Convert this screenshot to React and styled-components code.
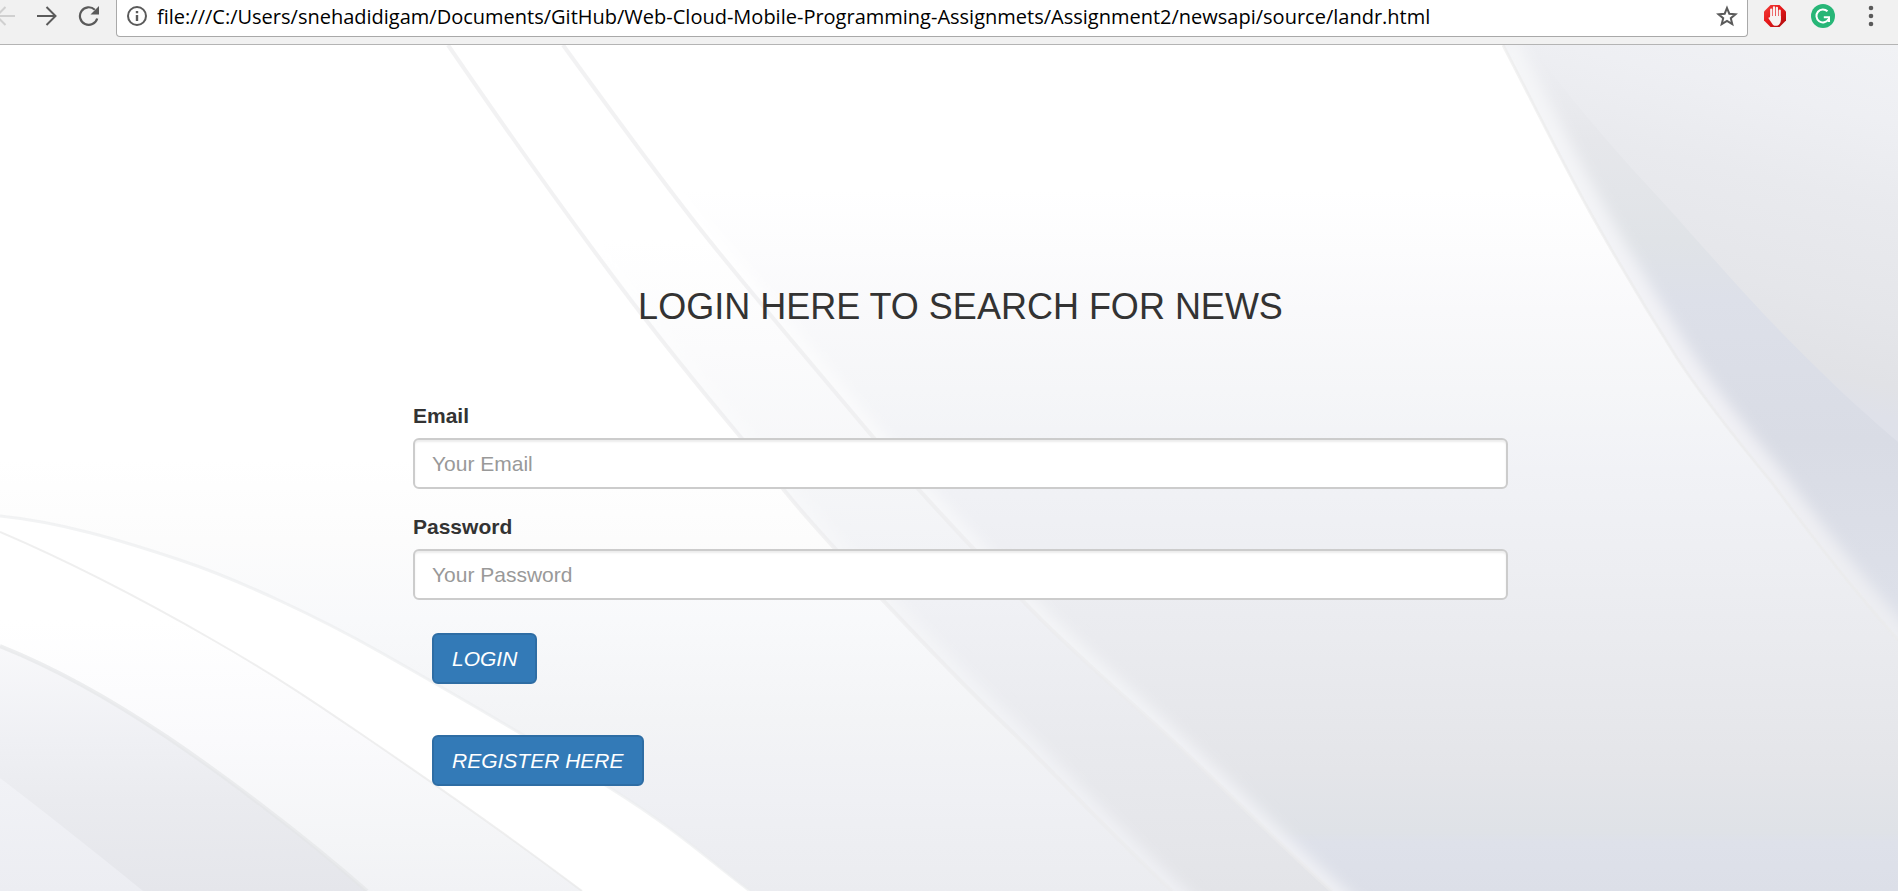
import React from "react";
import styled, { createGlobalStyle } from "styled-components";

const GlobalStyle = createGlobalStyle`
  *, *::before, *::after { box-sizing: border-box; }
  body {
    margin: 0;
    color: #333;
    background: #fff;
    font-family: "Liberation Sans", Arial, Helvetica, sans-serif;
    font-size: 21px;
    line-height: 30px;
  }
`;

const Window = styled.div`
  display: flex;
  flex-direction: column;
  min-height: 100vh;
  overflow: hidden;
`;

const Toolbar = styled.header`
  display: flex;
  align-items: flex-start;
  height: 45px;
  padding-right: 3px;
  background: #f1f1f1;
  border-bottom: 1px solid #b4b4b4;
`;

const NavButtons = styled.nav`
  display: flex;
  margin: 0 6px 0 -16px;
`;

const ToolButton = styled.button`
  display: flex;
  align-items: center;
  justify-content: center;
  flex: none;
  width: ${(p) => p.$width}px;
  height: 32px;
  padding: 0;
  border: 0;
  background: none;
  color: #5a5a5a;

  &:disabled { color: #d0d0d0; }
`;

const AddressBar = styled.div`
  display: flex;
  flex: 1;
  min-width: 0;
  height: 37px;
  padding-bottom: 4px;
  background: #fff;
  border: 1px solid #a9a9a9;
  border-top: 0;
  border-radius: 0 0 4px 4px;
`;

const AddressInput = styled.input`
  flex: 1;
  min-width: 0;
  height: 32px;
  padding: 0;
  border: 0;
  outline: 0;
  background: none;
  color: #000;
  font-family: "Open Sans", "Noto Sans", sans-serif;
  font-size: 20px;
`;

const Extensions = styled.div`
  display: flex;
  margin-left: 3px;
`;

const Page = styled.main`
  position: relative;
  flex: 1;
  padding: 242px 0 100px 23px;
`;

const Backdrop = styled.svg`
  position: absolute;
  inset: 0;
  width: 100%;
  height: 100%;
`;

const LoginForm = styled.form`
  position: relative;
  width: 1095px;
  max-width: 100%;
  margin: 0 auto;
`;

const Title = styled.h1`
  margin: 0 0 74px;
  font-size: 36px;
  font-weight: 400;
  line-height: 40px;
  text-align: center;
`;

const Field = styled.div`
  margin-bottom: 23px;
`;

const Label = styled.label`
  display: block;
  margin-bottom: 7px;
  font-weight: 700;
`;

const TextInput = styled.input`
  display: block;
  width: 100%;
  height: 51px;
  padding: 0 17px;
  border: 2px solid #ccc;
  border-radius: 6px;
  background: #fff;
  box-shadow: inset 0 2px 2px rgba(0, 0, 0, 0.075);
  color: #555;
  font: inherit;

  &::placeholder { color: #999; opacity: 1; }
`;

const Actions = styled.div`
  display: flex;
  flex-direction: column;
  align-items: flex-start;
  gap: 51px;
  padding: 10px 19px 0;
`;

const PrimaryButton = styled.button`
  height: 51px;
  padding: 0 18px;
  border: 2px solid #2e6da4;
  border-radius: 6px;
  background: #337ab7;
  color: #fff;
  font: inherit;
  font-style: italic;
`;

const CURVES = {
  a: "M448,45 C507,131 570,220 633,303 S740,435 784,490 S960,682 1000,720 S1110,834 1172,891",
  b: "M563,45 C605,103 650,165 697,225 S810,362 873,437 S985,560 1023,601 S1130,701 1172,740 S1275,840 1332,891",
  c: "M1503,45 C1530,97 1560,158 1590,212 C1618,262 1646,309 1677,358 C1706,402 1740,444 1773,484 C1800,521 1850,586 1898,640",
  d: "M1530,45 C1565,91 1605,140 1647,185 S1735,285 1780,331 S1857,407 1898,442",
  e: "M0,516 C60,522 120,540 180,560 S320,618 380,652 S540,744 610,788 S706,858 750,891",
  f: "M0,532 C75,564 145,601 213,640 S320,706 367,738 S510,837 582,891",
  g: "M0,646 C60,670 115,702 167,737 S300,832 367,891",
  h: "M0,778 C50,816 95,852 143,891",
};

const GRADIENTS = {
  base: [[460, "#ffffff"], [540, "#fcfcfc"], [620, "#f8f9fb"], [720, "#f3f4f6"], [800, "#eff0f4"], [891, "#ebecf0"]],
  ab: [[240, "#ffffff"], [350, "#fbfbfc"], [480, "#f5f6f8"], [600, "#f0f1f5"], [740, "#e9eaee"], [891, "#e3e4e8"]],
  bc: [[190, "#ffffff"], [310, "#f9f9fb"], [390, "#f5f6f8"], [470, "#f1f2f6"], [570, "#edeef2"], [660, "#e9eaee"], [770, "#e4e5e9"], [832, "#dfe2e7"], [842, "#dee1ea"], [891, "#dcdfe8"]],
  cd: [[45, "#eeeff3"], [140, "#e6e7eb"], [240, "#e0e3e7"], [300, "#dde0e9"], [440, "#d9dce5"], [520, "#dbdee7"], [640, "#dee1ea"]],
  dr: [[45, "#f1f2f5"], [120, "#eeeff3"], [200, "#e9eaee"], [300, "#e5e6ea"], [370, "#e1e2e6"], [400, "#dfe1e9"], [442, "#dee1ea"]],
  fg: [[620, "#ffffff"], [740, "#fafafc"], [840, "#f4f5f7"], [891, "#f1f2f5"]],
  gh: [[646, "#f8f8fa"], [740, "#eff0f4"], [800, "#eaebef"], [891, "#e5e6eb"]],
  hl: [[778, "#f1f2f6"], [891, "#ecedf2"]],
};

const REGIONS = [
  ["ab", `${CURVES.a} H1898 V45 Z`],
  ["bc", `${CURVES.b} H1898 V45 Z`],
  ["cd", `${CURVES.c} V45 Z`],
  ["dr", `${CURVES.d} V45 Z`],
  ["white", `${CURVES.e} H0 Z`],
  ["fg", `${CURVES.f} H0 Z`],
  ["gh", `${CURVES.g} H0 Z`],
  ["hl", `${CURVES.h} H0 Z`],
];

const SOFT_EDGES = [
  ["a", "L1240,953", "glowAB", "ab", 20],
  ["b", "L1400,953", "glowAB", "bc", 20],
  ["c", "L1944,692", "glowC", "cd", 30],
];

const LINES = [
  ["a", "#ebebec", 4],
  ["b", "#ebebec", 4],
  ["c", "#ebebeb", 3],
  ["e", "#ebecee", 3],
  ["f", "#e6e6e6", 2],
  ["g", "#e4e5e6", 4],
];

function Waves() {
  return (
    <Backdrop viewBox="0 45 1898 846" preserveAspectRatio="none" aria-hidden="true">
      <defs>
        {Object.entries(GRADIENTS).map(([id, stops]) => (
          <linearGradient
            key={id}
            id={id}
            gradientUnits="userSpaceOnUse"
            x1={id === "dr" ? 1898 : 0}
            y1="45"
            x2={id === "dr" ? 1700 : 0}
            y2="891"
          >
            {stops.map(([y, color]) => (
              <stop key={y} offset={(y - 45) / 846} stopColor={color} />
            ))}
          </linearGradient>
        ))}
        <linearGradient id="white"><stop stopColor="#fff" /></linearGradient>
        <linearGradient id="glowAB" gradientUnits="userSpaceOnUse" x1="0" y1="250" x2="0" y2="891">
          <stop offset="0" stopColor="#fff" />
          <stop offset="0.5" stopColor="#f5f6f8" />
          <stop offset="1" stopColor="#eff0f4" />
        </linearGradient>
        <linearGradient id="glowC" gradientUnits="userSpaceOnUse" x1="0" y1="45" x2="0" y2="640">
          <stop offset="0" stopColor="#f5f6f8" />
          <stop offset="0.6" stopColor="#f1f1f5" />
          <stop offset="1" stopColor="#ecedf1" />
        </linearGradient>
        <filter id="soft" filterUnits="userSpaceOnUse" x="0" y="0" width="1980" height="980">
          <feGaussianBlur stdDeviation="7" />
        </filter>
        {REGIONS.map(([id, d]) => (
          <clipPath key={id} id={`clip-${id}`}><path d={d} /></clipPath>
        ))}
      </defs>
      <rect x="0" y="45" width="1898" height="846" fill="url(#base)" />
      {REGIONS.slice(0, 3).map(([id, d]) => <path key={id} d={d} fill={`url(#${id})`} />)}
      {SOFT_EDGES.map(([curve, tail, glow, region, width]) => (
        <g key={curve} clipPath={`url(#clip-${region})`}>
          <path d={`${CURVES[curve]} ${tail}`} fill="none" stroke={`url(#${glow})`} strokeWidth={width} filter="url(#soft)" />
        </g>
      ))}
      {REGIONS.slice(3).map(([id, d]) => <path key={id} d={d} fill={`url(#${id})`} />)}
      {LINES.map(([curve, color, width]) => (
        <path key={curve} d={CURVES[curve]} fill="none" stroke={color} strokeWidth={width} strokeOpacity="0.65" />
      ))}
    </Backdrop>
  );
}

const ArrowIcon = ({ flip }) => (
  <svg width="20" height="20" viewBox="0 0 20 20" fill="none" stroke="currentColor" strokeWidth="2">
    <path d={flip ? "M20 10H2M10.500 1L1.500 10l9 9" : "M0 10h18M9.500 1l9 9-9 9"} />
  </svg>
);

const ReloadIcon = () => (
  <svg width="22" height="22" viewBox="0 0 22 22" fill="none" stroke="currentColor" strokeWidth="2.200">
    <path d="M19.200 13.500A8.800 8.800 0 1 1 16.800 4.700" />
    <path d="M21 1v8.500h-8.500z" fill="currentColor" stroke="none" />
  </svg>
);

const InfoIcon = () => (
  <svg width="22" height="22" viewBox="0 0 22 22" fill="none" stroke="currentColor" strokeWidth="2">
    <circle cx="11" cy="11" r="9" />
    <path d="M11 10v6M11 6v2.200" strokeWidth="2.400" />
  </svg>
);

const StarIcon = () => (
  <svg width="22" height="22" viewBox="0 0 22 22" fill="none" stroke="currentColor" strokeWidth="2">
    <path d="M11 3l2.300 5.700 6.200.5-4.700 4 1.500 6L11 16l-5.300 3.200 1.500-6-4.700-4 6.200-.5z" />
  </svg>
);

const BlockerIcon = () => (
  <svg width="24" height="24" viewBox="0 0 24 24">
    <defs>
      <linearGradient id="red" x1="0" y1="0" x2="1" y2="1">
        <stop offset="0" stopColor="#f0423c" />
        <stop offset="0.450" stopColor="#e8191b" />
        <stop offset="1" stopColor="#a90a0c" />
      </linearGradient>
    </defs>
    <path d="M7.500 1h9L23 7.500v9L16.500 23h-9L1 16.500v-9z" fill="url(#red)" />
    <g stroke="#f7f3f2" strokeWidth="2.200" strokeLinecap="round" fill="none">
      <path d="M8.200 5.500v9M11 3.300v10M13.900 3.800v10M16.700 6.500v9" />
    </g>
    <path d="M7.100 12h10.700v4.500c0 2.700-2 5.300-4.800 5.300-2.200 0-3.300-1-4.300-2.900L5.600 14.500c-.5-1 .7-1.700 1.500-.8z" fill="#f7f3f2" />
  </svg>
);

const GrammarIcon = () => (
  <svg width="24" height="24" viewBox="0 0 24 24" fill="none" stroke="#fff" strokeWidth="2">
    <circle cx="12" cy="12" r="12" fill="#27b677" stroke="none" />
    <path d="M16.500 7.300a6.500 6.500 0 1 0 1 8" />
    <path d="M12.800 13.300h5.200V18" />
  </svg>
);

const MenuIcon = () => (
  <svg width="6" height="22" viewBox="0 0 6 22" fill="currentColor">
    <circle cx="3" cy="3" r="2.300" />
    <circle cx="3" cy="11" r="2.300" />
    <circle cx="3" cy="19" r="2.300" />
  </svg>
);

export default function App() {
  return (
    <Window>
      <GlobalStyle />
      <Toolbar>
        <NavButtons aria-label="History">
          <ToolButton $width={42} disabled aria-label="Back"><ArrowIcon flip /></ToolButton>
          <ToolButton $width={42} aria-label="Forward"><ArrowIcon /></ToolButton>
          <ToolButton $width={42} aria-label="Reload"><ReloadIcon /></ToolButton>
        </NavButtons>
        <AddressBar>
          <ToolButton $width={40} aria-label="Page information"><InfoIcon /></ToolButton>
          <AddressInput
            aria-label="Address"
            readOnly
            value="file:///C:/Users/snehadidigam/Documents/GitHub/Web-Cloud-Mobile-Programming-Assignmets/Assignment2/newsapi/source/landr.html"
          />
          <ToolButton $width={40} aria-label="Bookmark this page"><StarIcon /></ToolButton>
        </AddressBar>
        <Extensions>
          <ToolButton $width={48} aria-label="Ad blocker"><BlockerIcon /></ToolButton>
          <ToolButton $width={48} aria-label="Grammar checker"><GrammarIcon /></ToolButton>
          <ToolButton $width={48} aria-label="Menu"><MenuIcon /></ToolButton>
        </Extensions>
      </Toolbar>
      <Page>
        <Waves />
        <LoginForm onSubmit={(event) => event.preventDefault()}>
          <Title>LOGIN HERE TO SEARCH FOR NEWS</Title>
          <Field>
            <Label htmlFor="email">Email</Label>
            <TextInput id="email" type="email" placeholder="Your Email" />
          </Field>
          <Field>
            <Label htmlFor="password">Password</Label>
            <TextInput id="password" type="password" placeholder="Your Password" />
          </Field>
          <Actions>
            <PrimaryButton type="submit">LOGIN</PrimaryButton>
            <PrimaryButton type="button">REGISTER HERE</PrimaryButton>
          </Actions>
        </LoginForm>
      </Page>
    </Window>
  );
}
